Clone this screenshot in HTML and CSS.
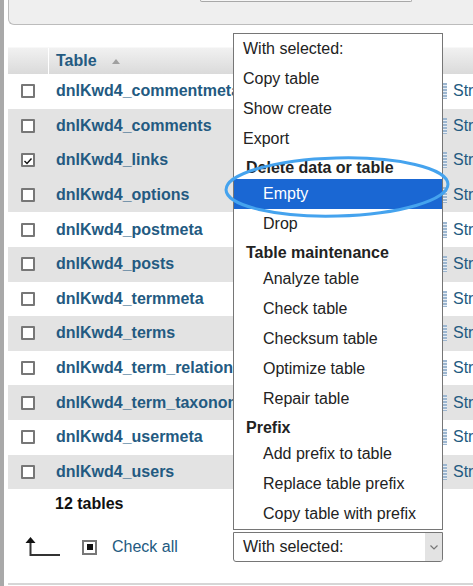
FILE: index.html
```html
<!DOCTYPE html>
<html lang="en">
<head>
  <meta charset="UTF-8" />
  <title>Tables - phpMyAdmin</title>
  <link rel="stylesheet" href="styles.css">
</head>
<body>

  <div class="edge"></div>

  <div class="main">

    <!-- Top panel -->
    <div class="top-panel">
      <div class="top-btn"></div>
    </div>

    <!-- Table list -->
    <div class="tbl">
      <div class="row head">
        <div class="cell-cb"></div>
        <div class="cell-name">Table <span class="sort"></span></div>
        <div class="cell-act"></div>
      </div>
      <div class="row"><div class="cell-cb"><span class="cb"></span></div><div class="cell-name">dnlKwd4_commentmeta</div><div class="cell-act"><span class="ico"></span>Structure</div></div>
      <div class="row alt"><div class="cell-cb"><span class="cb"></span></div><div class="cell-name">dnlKwd4_comments</div><div class="cell-act"><span class="ico"></span>Structure</div></div>
      <div class="row marked"><div class="cell-cb"><span class="cb checked"><svg width="10" height="10" viewBox="0 0 10 10"><path d="M1.5 5 L4 7.5 L8.5 2.5" fill="none" stroke="#111" stroke-width="1.4"/></svg></span></div><div class="cell-name">dnlKwd4_links</div><div class="cell-act"><span class="ico"></span>Structure</div></div>
      <div class="row alt"><div class="cell-cb"><span class="cb"></span></div><div class="cell-name">dnlKwd4_options</div><div class="cell-act"><span class="ico"></span>Structure</div></div>
      <div class="row"><div class="cell-cb"><span class="cb"></span></div><div class="cell-name">dnlKwd4_postmeta</div><div class="cell-act"><span class="ico"></span>Structure</div></div>
      <div class="row alt"><div class="cell-cb"><span class="cb"></span></div><div class="cell-name">dnlKwd4_posts</div><div class="cell-act"><span class="ico"></span>Structure</div></div>
      <div class="row"><div class="cell-cb"><span class="cb"></span></div><div class="cell-name">dnlKwd4_termmeta</div><div class="cell-act"><span class="ico"></span>Structure</div></div>
      <div class="row alt"><div class="cell-cb"><span class="cb"></span></div><div class="cell-name">dnlKwd4_terms</div><div class="cell-act"><span class="ico"></span>Structure</div></div>
      <div class="row"><div class="cell-cb"><span class="cb"></span></div><div class="cell-name">dnlKwd4_term_relationships</div><div class="cell-act"><span class="ico"></span>Structure</div></div>
      <div class="row alt"><div class="cell-cb"><span class="cb"></span></div><div class="cell-name">dnlKwd4_term_taxonomy</div><div class="cell-act"><span class="ico"></span>Structure</div></div>
      <div class="row"><div class="cell-cb"><span class="cb"></span></div><div class="cell-name">dnlKwd4_usermeta</div><div class="cell-act"><span class="ico"></span>Structure</div></div>
      <div class="row alt"><div class="cell-cb"><span class="cb"></span></div><div class="cell-name">dnlKwd4_users</div><div class="cell-act"><span class="ico"></span>Structure</div></div>
    </div>

    <div class="summary">12 tables</div>

    <!-- Bulk actions -->
    <div class="actions">
      <div class="actions-left">
        <svg class="arrow" width="36" height="21" viewBox="0 0 36 21">
          <path d="M5.5 6 V19 H35" fill="none" stroke="#333" stroke-width="2"/>
          <path d="M0.5 7 L5.5 1 L10.5 7 Z" fill="#111"/>
        </svg>
        <span class="check-all-box"><span></span></span>
        <span class="check-all">Check all</span>
      </div>
      <div class="select">
        <span>With selected:</span>
        <span class="select-arrow"><svg width="8" height="5" viewBox="0 0 8 5"><path d="M0.5 0.5 L4 4 L7.5 0.5" fill="none" stroke="#777" stroke-width="1.2"/></svg></span>
      </div>
    </div>

    <div class="rule"></div>
  </div>

  <!-- Open dropdown list -->
  <div class="dropdown">
    <div class="opt">With selected:</div>
    <div class="opt">Copy table</div>
    <div class="opt">Show create</div>
    <div class="opt">Export</div>
    <div class="group">Delete data or table</div>
    <div class="opt sub active">Empty</div>
    <div class="opt sub">Drop</div>
    <div class="group">Table maintenance</div>
    <div class="opt sub">Analyze table</div>
    <div class="opt sub">Check table</div>
    <div class="opt sub">Checksum table</div>
    <div class="opt sub">Optimize table</div>
    <div class="opt sub">Repair table</div>
    <div class="group">Prefix</div>
    <div class="opt sub">Add prefix to table</div>
    <div class="opt sub">Replace table prefix</div>
    <div class="opt sub">Copy table with prefix</div>
  </div>

  <!-- Annotation circle -->
  <svg class="mark" width="250" height="80" viewBox="0 0 250 80">
    <ellipse cx="117" cy="37" rx="111" ry="29" fill="none" stroke="#45a3ee" stroke-width="3" transform="rotate(-1.5 117 37)"/>
  </svg>

</body>
</html>
```

FILE: styles.css
```css
body {
  margin: 0;
  font-family: "Liberation Sans", Arial, sans-serif;
  font-size: 16px;
  color: #222;
  background: #fff;
  display: flex;
  width: 473px;
  height: 586px;
  overflow: hidden;
}
.edge {
  width: 4px;
  background: #a9a9a9;
  flex-shrink: 0;
}
.main {
  flex: 1;
  padding-left: 4px;
  min-width: 0;
}
.top-panel {
  height: 24px;
  background: #efefef;
  border-left: 1px solid #bcbcbc;
  border-bottom: 1px solid #bcbcbc;
  border-bottom-left-radius: 6px;
}
.top-btn {
  margin-left: 191px;
  width: 210px;
  height: 1px;
  background: #f6f6f6;
  border: 1px solid #a8a8a8;
  border-top: none;
  border-radius: 0 0 3px 3px;
}
.tbl {
  margin-top: 22px;
}
.row {
  display: grid;
  grid-template-columns: 41px 392px 1fr;
  height: 34.6px;
  align-items: center;
  white-space: nowrap;
  overflow: hidden;
}
.row.alt, .row.marked {
  background: #e3e3e3;
}
.row.head {
  height: 27px;
  background: linear-gradient(#f1f1f1, #dadada);
  border-top: 1px solid #f8f8f8;
  box-sizing: border-box;
}
.row.head .cell-cb {
  height: 100%;
  border-right: 1px solid #fff;
}
.cell-cb {
  padding-left: 13px;
  display: flex;
  align-items: center;
}
.cell-name {
  padding-left: 7px;
  font-weight: bold;
  color: #235a81;
  overflow: hidden;
}
.sort {
  display: inline-block;
  margin-left: 11px;
  width: 0;
  height: 0;
  border-left: 4.5px solid transparent;
  border-right: 4.5px solid transparent;
  border-bottom: 5px solid #a0a0a0;
  vertical-align: 2px;
}
.cb {
  width: 14px;
  height: 14px;
  box-sizing: border-box;
  border: 2px solid #777;
  border-radius: 1px;
  background: #fff;
  display: flex;
  align-items: center;
  justify-content: center;
}
.cb svg {
  margin-top: 1px;
}
.cell-act {
  display: flex;
  align-items: center;
  color: #235a81;
  overflow: hidden;
}
.ico {
  width: 4px;
  height: 16px;
  margin: 0 6px 0 2px;
  background: repeating-linear-gradient(#9cb6d0 0 2px, #e8eef4 2px 3px);
  flex-shrink: 0;
}
.summary {
  height: 29px;
  line-height: 30px;
  padding-left: 47px;
  font-weight: bold;
  color: #111;
}
.actions {
  margin-top: 14px;
  height: 30px;
  display: flex;
  align-items: center;
}
.actions-left {
  width: 225px;
  display: flex;
  align-items: center;
}
.arrow {
  margin-left: 17px;
  margin-top: -2px;
}
.check-all-box {
  margin-left: 21px;
  width: 15px;
  height: 15px;
  box-sizing: border-box;
  border: 2px solid #777;
  display: flex;
  align-items: center;
  justify-content: center;
}
.check-all-box span {
  width: 6px;
  height: 6px;
  background: #111;
}
.check-all {
  margin-left: 15px;
  color: #235a81;
}
.select {
  width: 210px;
  height: 30px;
  box-sizing: border-box;
  border: 1px solid #767676;
  border-radius: 0 0 3px 3px;
  display: flex;
  align-items: center;
  justify-content: space-between;
  padding-left: 9px;
  overflow: hidden;
}
.select-arrow {
  width: 17px;
  height: 100%;
  background: #e3e3e3;
  display: flex;
  align-items: center;
  justify-content: center;
}
.rule {
  margin-top: 21px;
  height: 2px;
  background: #d6d6d6;
}
.dropdown {
  position: absolute;
  left: 233px;
  top: 33px;
  width: 210px;
  box-sizing: border-box;
  border: 1px solid #767676;
  background: #fff;
}
.opt {
  height: 30px;
  line-height: 30px;
  padding-left: 9px;
  white-space: nowrap;
}
.opt.sub {
  padding-left: 29px;
}
.opt.active {
  background: #1a67d3;
  color: #fff;
}
.group {
  height: 25px;
  box-sizing: border-box;
  padding-top: 3px;
  line-height: 22px;
  padding-left: 12px;
  font-weight: bold;
}
.mark {
  position: absolute;
  left: 220px;
  top: 150px;
}
```
